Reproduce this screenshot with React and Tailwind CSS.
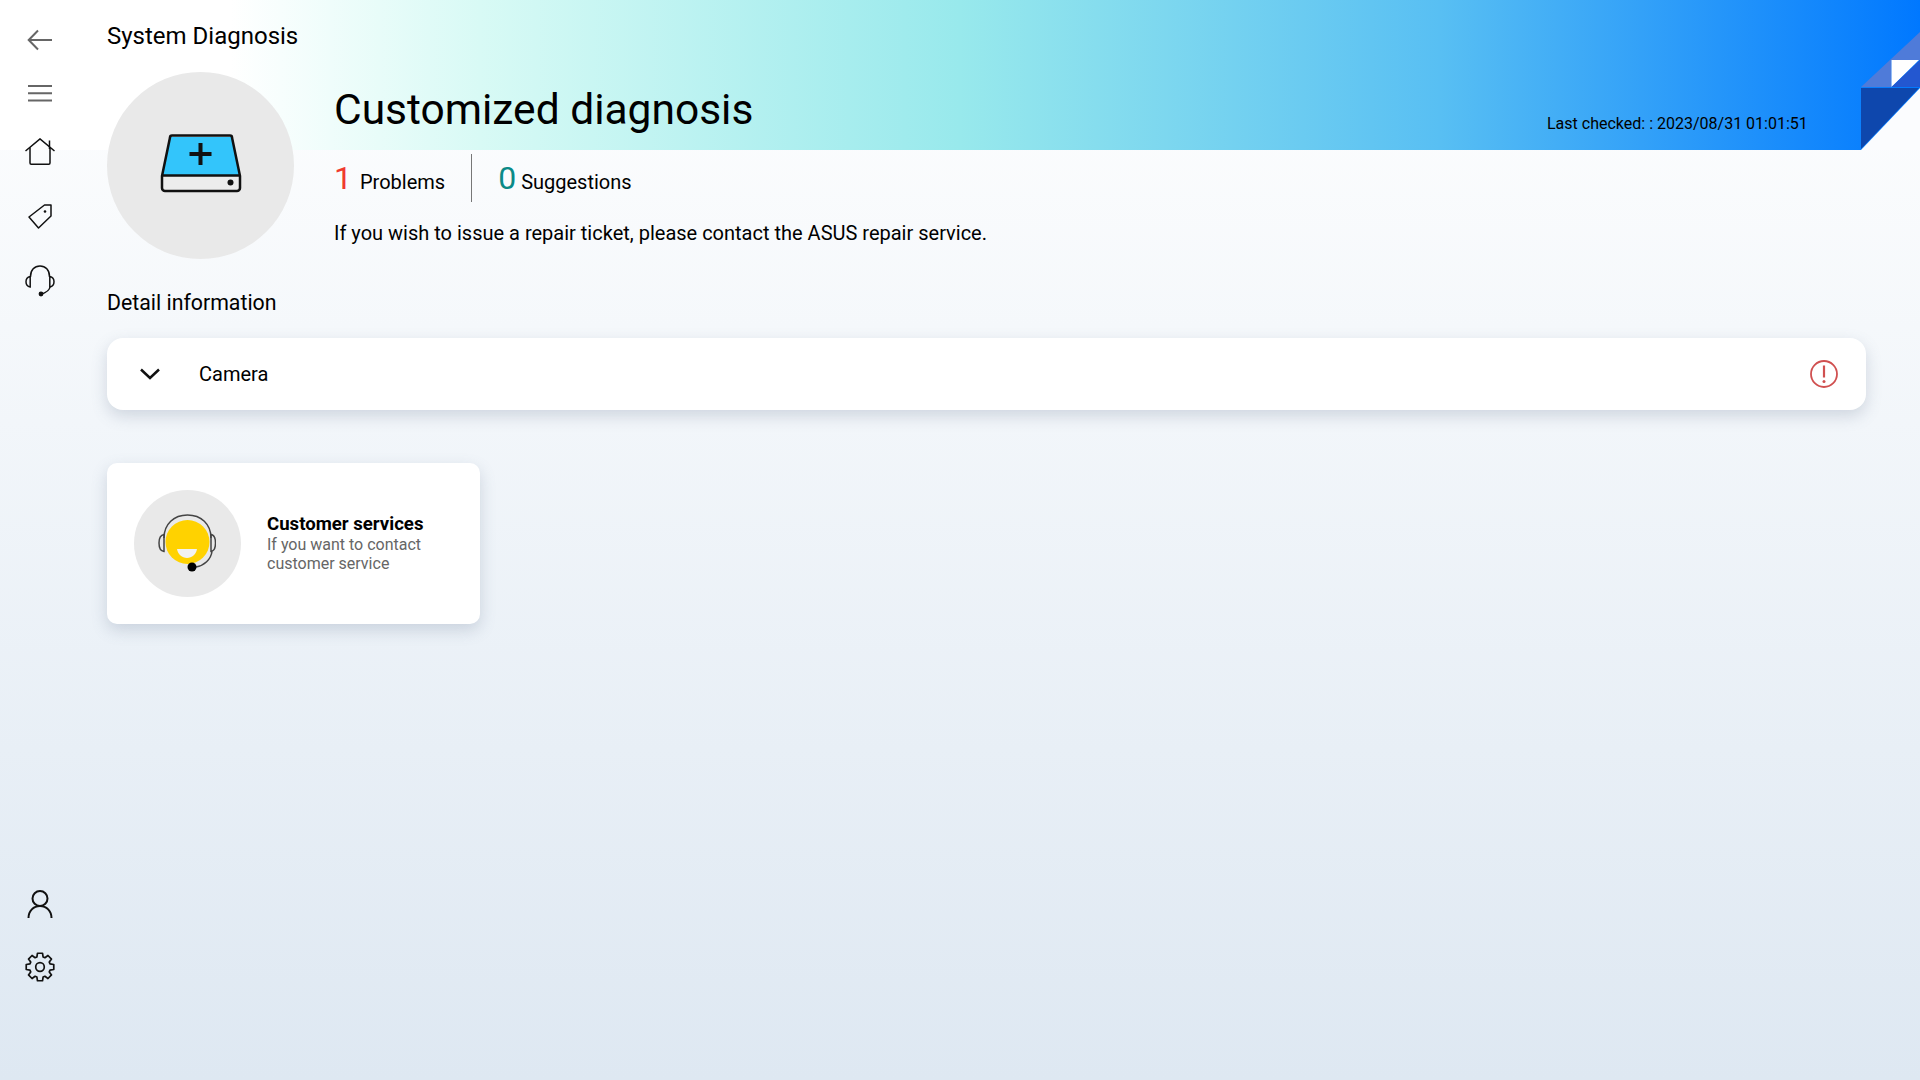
const font = { fontFamily: "Roboto, sans-serif" };

function BackIcon() {
  return (
    <svg width="26" height="22" viewBox="0 0 26 22" fill="none" stroke="#666" strokeWidth="2">
      <path d="M25 11H2M11 1.500 1.700 11l9.300 9.500" />
    </svg>
  );
}

function MenuIcon() {
  return (
    <svg width="26" height="18" viewBox="0 0 26 18" fill="none" stroke="#666" strokeWidth="2">
      <path d="M1 2h24M1 9.300h24M1 16.600h24" />
    </svg>
  );
}

function HomeIcon() {
  return (
    <svg width="30" height="27" viewBox="0 0 30 27" fill="none" stroke="#111" strokeWidth="1.500">
      <path d="M.5 13 15 .9l14.500 12.100" />
      <path d="M5 9.500v15.500a1.200 1.200 0 0 0 1.200 1.200h17.600a1.200 1.200 0 0 0 1.200-1.200V9.500" />
      <path d="M24.500 2.500v8.500" />
    </svg>
  );
}

function TagIcon() {
  return (
    <svg width="24" height="25" viewBox="0 0 24 25" fill="none" stroke="#111" strokeWidth="1.500">
      <path d="M1 13 16.500 1h6.500v11L10.500 24z" strokeLinejoin="round" />
      <circle cx="17" cy="7.500" r="1.300" fill="#111" stroke="none" />
    </svg>
  );
}

function HeadsetIcon() {
  return (
    <svg width="30" height="32" viewBox="0 0 30 32" fill="none" stroke="#111" strokeWidth="1.500">
      <path d="M5.500 12V11.500C5.500 5 9.500 1 15 1s9.500 4 9.500 10.500V12" />
      <path d="M5.200 11.500C2.500 12 1 13.800 1 16.800s1.500 4.800 4.200 5.200zM24.800 11.500c2.700.5 4.200 2.300 4.200 5.300s-1.500 4.800-4.200 5.200z" />
      <path d="M25 22c-.5 3.500-5 6-9 7.500" />
      <circle cx="16" cy="29" r="2.400" fill="#111" stroke="none" />
    </svg>
  );
}

function UserIcon() {
  return (
    <svg width="26" height="29" viewBox="0 0 26 29" fill="none" stroke="#111" strokeWidth="2">
      <circle cx="13" cy="8.500" r="7.500" />
      <path d="M1.500 28c0-7 5-12 11.500-12s11.500 5 11.500 12" />
    </svg>
  );
}

// eight chunky teeth, worked out once instead of typing all the points
const gearPath = (() => {
  const points = [];
  for (let i = 0; i < 8; i++) {
    const a = (i * Math.PI) / 4 - Math.PI / 2;
    const at = (r, d) => `${(15 + r * Math.cos(a + d)).toFixed(2)} ${(15 + r * Math.sin(a + d)).toFixed(2)}`;
    points.push(at(10.500, -0.300), at(14, -0.180), at(14, 0.180), at(10.500, 0.300));
  }
  return `M${points.join("L")}z`;
})();

function GearIcon() {
  return (
    <svg width="30" height="30" viewBox="0 0 30 30" fill="none" stroke="#111" strokeWidth="1.700" strokeLinejoin="round">
      <path d={gearPath} />
      <circle cx="15" cy="15" r="4.300" />
    </svg>
  );
}

function DriveIcon() {
  return (
    <svg width="82" height="60" viewBox="0 0 82 60" fill="none" className="mb-[6px]">
      <path d="M10 4h62l8 42H2z" fill="#33c5fb" />
      <path d="M2 42h78v13a3 3 0 0 1-3 3H5a3 3 0 0 1-3-3z" fill="#ececec" />
      <path d="M2 55V43L10 4.500A2 2 0 0 1 12 2.500h58a2 2 0 0 1 2 2L80 43v12a3 3 0 0 1-3 3H5a3 3 0 0 1-3-3zM3 42.500h76" stroke="#111" strokeWidth="2.500" strokeLinejoin="round" />
      <circle cx="70.500" cy="49.500" r="3" fill="#111" />
      <path d="M40.500 10v22M29.500 21h22" stroke="#111" strokeWidth="4" />
    </svg>
  );
}

function AgentIcon() {
  return (
    <svg width="58" height="58" viewBox="0 0 58 58" fill="none" className="mr-[2px]">
      <circle cx="29.500" cy="28" r="22" fill="#ffd200" />
      <path d="M19 35h20c-1 5.500-5 9-10 9s-9-3.500-10-9z" fill="#f2f2f2" />
      <path d="M6 24C6 10 16 1 29.500 1S53 10 53 24" stroke="#444" strokeWidth="1.500" />
      <path d="M6 20.500c-3.500.5-5 3.500-5 8.500s1.500 8 5 8.500zM53 20.500c3.500.5 4.500 3.500 4.500 8.500s-1 8-4.500 8.500z" stroke="#444" strokeWidth="1.500" />
      <path d="M54 37.500c-1 8-8 14-16 15.500" stroke="#444" strokeWidth="1.500" />
      <circle cx="34" cy="53" r="4.500" fill="#000" />
    </svg>
  );
}

function CornerFold() {
  return (
    <svg width="59" height="120" viewBox="0 0 58 120" preserveAspectRatio="none" className="absolute right-0 top-[30px]">
      <path d="M0 120 58 58v62z" fill="#fbfcfe" />
      <path d="M0 58h57L0 119z" fill="#0e47ad" />
      <path d="M0 57 58 2v28H30v27z" fill="#4f7bd9" />
      <path d="M30 30h27L30 57z" fill="#ffffff" />
      <path d="M58 30v27H30z" fill="#2357d0" />
    </svg>
  );
}

export default function App() {
  return (
    <div
      className="relative flex h-[1080px] w-[1920px] overflow-hidden bg-gradient-to-b from-white to-[#dee8f2] text-black"
      style={font}
    >
      {/* banner sits behind the header text */}
      <div className="absolute inset-x-0 top-0 h-[150px] bg-[linear-gradient(90deg,#ffffff_12%,#d8faf5_25%,#98e9ec_50%,#58bff3_75%,#0078ff_100%)]">
        <CornerFold />
      </div>

      <aside className="relative flex w-[80px] shrink-0 flex-col items-center justify-between pb-[98px] pt-[29px]">
        <div className="flex flex-col items-center">
          <BackIcon />
          <div className="mt-[33px] flex"><MenuIcon /></div>
          <div className="mt-[36px] flex"><HomeIcon /></div>
          <div className="mt-[39px] flex"><TagIcon /></div>
          <div className="mt-[36px] flex"><HeadsetIcon /></div>
        </div>
        <div className="flex flex-col items-center">
          <div className="flex"><UserIcon /></div>
          <div className="mt-[33px] flex"><GearIcon /></div>
        </div>
      </aside>

      <main className="relative ml-[27px] flex w-[1759px] flex-col">
        <h1 className="mt-[21px] text-[24px] font-normal leading-[30px]">System Diagnosis</h1>

        <div className="mt-[21px] flex">
          <div className="flex h-[187px] w-[187px] items-center justify-center rounded-full bg-[#e9e9e9]">
            <DriveIcon />
          </div>
          <div className="ml-[40px] flex flex-col">
            <h2 className="mt-[10px] text-[42.500px] font-normal leading-[56px]">Customized diagnosis</h2>
            <div className="mt-[16px] flex h-[48px] items-center">
              <span className="text-[32px] font-normal leading-[48px] text-[#f03a2e]">1</span>
              <span className="ml-[8px] mt-[8px] text-[20px] leading-[24px]">Problems</span>
              <div className="ml-[26px] h-[48px] w-px bg-[#777]" />
              <span className="ml-[26px] text-[32px] font-normal leading-[48px] text-[#0b8a87]">0</span>
              <span className="ml-[5px] mt-[8px] text-[20px] leading-[24px]">Suggestions</span>
            </div>
            <p className="mt-[17.500px] text-[20px] leading-[26px]">
              If you wish to issue a repair ticket, please contact the ASUS repair service.
            </p>
          </div>
          <span className="absolute left-[1440px] top-[114px] text-[16px] leading-[20px]">
            Last checked: : 2023/08/31 01:01:51
          </span>
        </div>

        <h3 className="mt-[31px] text-[21.300px] font-normal leading-[26px]">Detail information</h3>

        <div className="mt-[22px] flex h-[72px] items-center rounded-[16px] bg-white pl-[32px] pr-[27px] shadow-[0_6px_16px_rgba(90,110,140,0.24)]">
          <svg width="22" height="14" viewBox="0 0 22 14" fill="none" stroke="#111" strokeWidth="2.500">
            <path d="M2 2.500 11 11l9-8.500" />
          </svg>
          <span className="ml-[38px] text-[20px]">Camera</span>
          <svg width="30" height="30" viewBox="0 0 30 30" fill="none" stroke="#d05050" strokeWidth="1.800" className="ml-auto">
            <circle cx="15" cy="15" r="13" />
            <path d="M15 6.500v12" strokeWidth="2.200" />
            <circle cx="15" cy="22.500" r="1.500" fill="#d05050" stroke="none" />
          </svg>
        </div>

        <div className="mt-[53px] flex h-[160.500px] w-[373px] items-center rounded-[10px] bg-white pl-[27px] shadow-[0_6px_16px_rgba(90,110,140,0.24)]">
          <div className="flex h-[107px] w-[107px] items-center justify-center rounded-full bg-[#e9e9e9]">
            <AgentIcon />
          </div>
          <div className="ml-[26px]">
            <div className="text-[18.600px] font-bold leading-[21px]">Customer services</div>
            <div className="text-[16px] leading-[19px] text-[#666]">
              If you want to contact<br />customer service
            </div>
          </div>
        </div>
      </main>
    </div>
  );
}
